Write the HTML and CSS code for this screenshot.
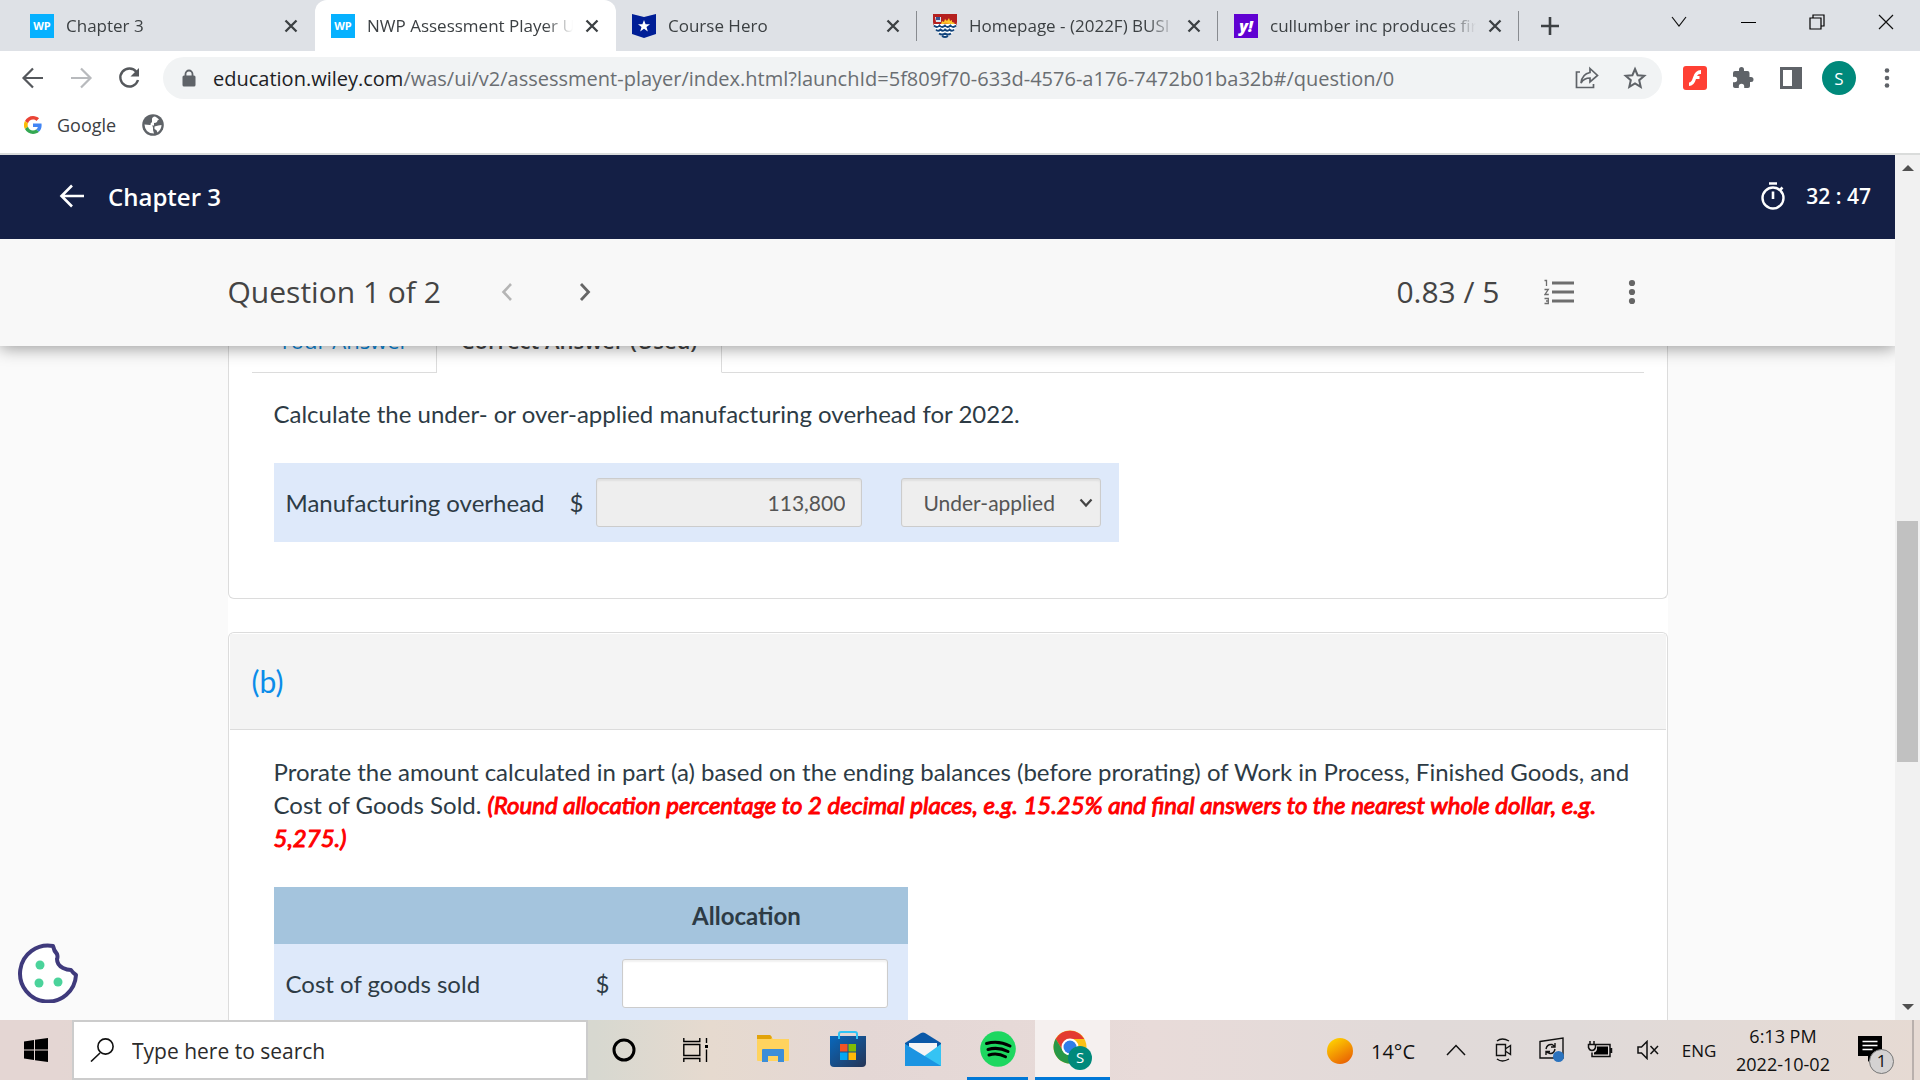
FILE: index.html
```html
<!DOCTYPE html>
<html lang="en">
<head>
<meta charset="utf-8">
<meta name="viewport" content="width=device-width, initial-scale=1">
<title>NWP Assessment Player UI</title>
<link rel="stylesheet" href="styles.css">
</head>
<body>
<svg class="defs" aria-hidden="true">
  <symbol id="i-close" viewBox="0 0 14 14"><path d="M1.5 1.5l11 11M12.500 1.500l-11 11" fill="none" stroke="currentColor" stroke-width="2.300"/></symbol>
</svg>

<header class="browser">
  <div class="tab-strip">
    <div class="tab">
      <span class="favicon wp">WP</span><span class="tab-title">Chapter 3</span>
      <button class="tab-close" aria-label="Close tab"><svg><use href="#i-close"/></svg></button>
    </div>
    <div class="tab tab-active">
      <span class="favicon wp">WP</span><span class="tab-title">NWP Assessment Player UI</span>
      <button class="tab-close" aria-label="Close tab"><svg><use href="#i-close"/></svg></button>
    </div>
    <div class="tab tab-divided">
      <svg class="favicon" viewBox="0 0 24 24"><path d="M0 0l12 3 12-3v20l-12 4L0 20z" fill="#001e96"/><path d="M12 6l1.600 4.300H18l-3.500 2.700 1.300 4.400L12 14.800l-3.800 2.600L9.500 13 6 10.300h4.400z" fill="#fff"/></svg>
      <span class="tab-title">Course Hero</span>
      <button class="tab-close" aria-label="Close tab"><svg><use href="#i-close"/></svg></button>
    </div>
    <div class="tab tab-divided">
      <svg class="favicon" viewBox="0 0 24 24"><path d="M0 0h24v8q0 3-2 5H2q-2-2-2-5z" fill="#b5201f"/><path d="M2 3h6v5H3z" fill="#d9e4f2"/><path d="M3 3h4v3H3z" fill="#3a4f8c"/><path d="M8 10l1-3 2 1 1-3 2 2 2-3 1 3 2-1v2l3 1-2 2z" fill="#ffc72c"/><path d="M9 11q3-5 9 0z" fill="#f39a1f"/><path d="M1 10h22v2q-1 7-11 12Q2 18 1 12z" fill="#fff"/><path d="M1 11.500q3 3 5.500 0 2.500 3 5.500 0 2.500 3 5.500 0 2.500 3 5.500 0M3 15.500q2 2.500 4.500 0 2.500 2.500 4.500 0 2.500 2.500 4.500 0 2.500 2.500 4.500 0M6 19.500q3 2 6 0 3 2 6 0M9 22q3 2 6 0" fill="none" stroke="#12447c" stroke-width="1.800"/></svg>
      <span class="tab-title">Homepage - (2022F) BUSI 2083</span>
      <button class="tab-close" aria-label="Close tab"><svg><use href="#i-close"/></svg></button>
    </div>
    <div class="tab tab-divided">
      <span class="favicon yahoo">y!</span>
      <span class="tab-title">cullumber inc produces fire trucks</span>
      <button class="tab-close" aria-label="Close tab"><svg><use href="#i-close"/></svg></button>
    </div>
    <button class="new-tab" aria-label="New tab"><svg width="20" height="20" viewBox="0 0 20 20"><path d="M10 1v18M1 10h18" stroke="#3c4043" stroke-width="2.600"/></svg></button>
    <div class="window-controls">
      <button aria-label="Search tabs"><svg width="16" height="16" viewBox="0 0 16 16"><path d="M1 3l7 9 7-9" fill="none" stroke="#111" stroke-width="1.200"/></svg></button>
      <button aria-label="Minimize"><svg width="16" height="16" viewBox="0 0 16 16"><path d="M1 8.500h15" stroke="#000" stroke-width="1"/></svg></button>
      <button aria-label="Restore"><svg width="16" height="16" viewBox="0 0 16 16"><path d="M1 4h11v11H1zM4 4V1h11v11h-3" fill="none" stroke="#000" stroke-width="1.200"/></svg></button>
      <button aria-label="Close"><svg width="16" height="16" viewBox="0 0 16 16"><path d="M1 1l14 14M15 1L1 15" stroke="#111" stroke-width="1.200"/></svg></button>
    </div>
  </div>

  <div class="toolbar">
    <div class="nav-buttons">
      <button aria-label="Back"><svg width="24" height="24" viewBox="0 0 24 24"><path d="M22 12H3M12 2.500L2.500 12l9.500 9.500" fill="none" stroke="#55585c" stroke-width="2.200"/></svg></button>
      <button aria-label="Forward"><svg width="24" height="24" viewBox="0 0 24 24"><path d="M2 12h19M12 2.500l9.500 9.500-9.500 9.500" fill="none" stroke="#b8babd" stroke-width="2.200"/></svg></button>
      <button aria-label="Reload"><svg width="24" height="24" viewBox="0 0 24 24"><path d="M19.500 6A9 9 0 1 0 21 14" fill="none" stroke="#55585c" stroke-width="2.400"/><path d="M22 2v8.500h-8.500z" fill="#55585c"/></svg></button>
    </div>
    <div class="omnibox">
      <svg width="14" height="18" viewBox="0 0 14 18"><path d="M3.500 7V5a3.500 3.500 0 0 1 7 0v2" fill="none" stroke="#5f6368" stroke-width="1.800"/><rect x=".5" y="6.500" width="13" height="11" rx="1.500" fill="#5f6368"/></svg>
      <div class="url" role="textbox" aria-label="Address" contenteditable="true" spellcheck="false"><span class="url-host">education.wiley.com</span>/was/ui/v2/assessment-player/index.html?launchId=5f809f70-633d-4576-a176-7472b01ba32b#/question/0</div>
      <button aria-label="Share"><svg width="24" height="24" viewBox="0 0 24 24"><path d="M5 6H1.500v15.500h17V18" fill="none" stroke="#5f6368" stroke-width="1.700"/><path d="M15 2.500L22.500 9.500 15 16v-4q-6 0-9 5 1-9 9-10.500z" fill="none" stroke="#5f6368" stroke-width="1.700"/></svg></button>
      <button aria-label="Bookmark this tab"><svg width="24" height="24" viewBox="0 0 24 24"><path d="M12 3l2.600 6.200 6.700.6-5.100 4.400 1.500 6.600L12 17.300l-5.700 3.500 1.500-6.600-5.100-4.400 6.700-.6z" fill="none" stroke="#5f6368" stroke-width="2"/></svg></button>
    </div>
    <div class="extensions">
      <button aria-label="Flash"><svg width="24" height="24" viewBox="0 0 24 24"><rect width="24" height="24" rx="3" fill="#ff4034"/><path d="M18 4v4q-3-.5-4 2h2.500v3H13q-2 7-7 7v-3.500q2.500 0 4-5Q12 4 18 4z" fill="#fff"/></svg></button>
      <button aria-label="Extensions"><svg width="24" height="24" viewBox="0 0 24 24"><path d="M20 11h-1.500V7a2 2 0 0 0-2-2H13V3.500a2.500 2.500 0 0 0-5 0V5H4a2 2 0 0 0-2 2v3.800h1.500a2.700 2.700 0 0 1 0 5.400H2V20c0 1.100.9 2 2 2h3.800v-1.500a2.700 2.700 0 0 1 5.400 0V22H17a2 2 0 0 0 2-2v-4h1a2.500 2.500 0 0 0 0-5z" fill="#5f6368"/></svg></button>
      <button aria-label="Side panel"><svg width="24" height="24" viewBox="0 0 24 24"><path d="M1 1h22v22H1zM4 4v16h9V4z" fill="#5f6368" fill-rule="evenodd"/></svg></button>
      <button class="avatar" aria-label="Profile">S</button>
      <button aria-label="Menu"><svg width="24" height="24" viewBox="0 0 24 24"><g fill="#5f6368"><circle cx="12" cy="4.500" r="2.300"/><circle cx="12" cy="12" r="2.300"/><circle cx="12" cy="19.500" r="2.300"/></g></svg></button>
    </div>
  </div>

  <nav class="bookmarks" aria-label="Bookmarks">
    <a href="#"><svg width="18" height="18" viewBox="0 0 48 48"><path fill="#ea4335" d="M24 9.500c3.500 0 6.700 1.200 9.200 3.600l6.900-6.900C35.900 2.400 30.500 0 24 0 14.600 0 6.500 5.400 2.600 13.200l8 6.200C12.400 13.700 17.700 9.500 24 9.500z"/><path fill="#4285f4" d="M47 24.600c0-1.600-.2-3.100-.4-4.600H24v9h12.900c-.6 3-2.300 5.500-4.800 7.200l7.700 6C44.400 38 47 31.800 47 24.600z"/><path fill="#fbbc05" d="M10.500 28.600a14.500 14.500 0 0 1 0-9.200l-8-6.200a24 24 0 0 0 0 21.600z"/><path fill="#34a853" d="M24 48c6.500 0 11.900-2.100 15.900-5.800l-7.700-6c-2.200 1.500-4.900 2.300-8.200 2.300-6.300 0-11.600-4.200-13.500-9.900l-8 6.200C6.500 42.600 14.600 48 24 48z"/></svg>Google</a>
    <a href="#" aria-label="Site"><svg width="22" height="22" viewBox="0 0 22 22"><circle cx="11" cy="11" r="10.800" fill="#5f6368"/><path d="M2.500 10.500L8 11q3 0 3 3v2l1 3.500q-9 0-9.500-9zM10 5q0-2 3-2.500 2 1 4 3-2 .5-2 2.500-1 1-3 1v2.500H8.500Q8 9 10 8zM12.500 12.500q4-1.500 7-1.500 0 4-4 7.500-.5-3-3-3.500z" fill="#fff"/></svg></a>
  </nav>
</header>

<div class="page">
  <div class="app">
    <header class="app-bar">
      <button aria-label="Back"><svg width="26" height="24" viewBox="0 0 26 24"><path d="M25 12H2.500M13 1.500L2.500 12 13 22.500" fill="none" stroke="#fff" stroke-width="2.600"/></svg></button>
      <h1>Chapter 3</h1>
      <svg width="24" height="28" viewBox="0 0 24 28"><circle cx="12" cy="16" r="10.500" fill="none" stroke="#fff" stroke-width="2.400"/><path d="M8 1.500h8M12 9.500v7.500M18.500 8.500l3-3" fill="none" stroke="#fff" stroke-width="2.600"/></svg>
      <span class="timer">32 : 47</span>
    </header>

    <div class="question-bar">
      <div class="question-bar-inner">
        <h2>Question 1 of 2</h2>
        <button aria-label="Previous question" disabled><svg width="12" height="18" viewBox="0 0 12 18"><path d="M10 1L2.500 9l7.500 8" fill="none" stroke="#b5b5b5" stroke-width="2.600"/></svg></button>
        <button aria-label="Next question"><svg width="12" height="18" viewBox="0 0 12 18"><path d="M2 1l7.500 8L2 17" fill="none" stroke="#666" stroke-width="2.800"/></svg></button>
        <span class="score">0.83 / 5</span>
        <button aria-label="Question list"><svg width="30" height="26" viewBox="0 0 30 26"><path d="M8 4h22M8 13h22M8 22h22" stroke="#6e6e6e" stroke-width="3"/><path d="M.5 1.500h2V7M.5 10.500h3.800L1 15.500h3.800M.5 19.500h3.800v5H.5M2 22h2" fill="none" stroke="#6e6e6e" stroke-width="1.300"/></svg></button>
        <button aria-label="More options"><svg width="30" height="26" viewBox="0 0 30 26"><g fill="#666"><circle cx="15" cy="4" r="3.100"/><circle cx="15" cy="13" r="3.100"/><circle cx="15" cy="22" r="3.100"/></g></svg></button>
      </div>
    </div>

    <main class="content">
      <div class="sheet">
        <section class="card card-first">
          <div class="answer-tabs">
            <a href="#" class="answer-tab">Your Answer</a>
            <a href="#" class="answer-tab answer-tab-current">Correct Answer (Used)</a>
            <span class="answer-tabs-rest"></span>
          </div>
          <div class="card-body">
            <p>Calculate the under- or over-applied manufacturing overhead for 2022.</p>
            <table class="answer-table overhead">
              <tr>
                <th scope="row"><label for="overhead">Manufacturing overhead</label></th>
                <td><span class="money"><span>$</span><input id="overhead" type="text" value="113,800" readonly></span></td>
                <td><span class="choice"><select aria-label="Under- or over-applied"><option>Under-applied</option><option>Over-applied</option></select><svg width="14" height="10" viewBox="0 0 14 10"><path d="M1.500 1.500L7 7.500l5.500-6" fill="none" stroke="#444" stroke-width="2.200"/></svg></span></td>
              </tr>
            </table>
          </div>
        </section>

        <section class="card card-open">
          <h3>(b)</h3>
          <div class="card-body">
            <p>Prorate the amount calculated in part (a) based on the ending balances (before prorating) of Work in Process, Finished Goods, and Cost of Goods Sold. <strong>(Round allocation percentage to 2 decimal places, e.g. 15.25% and final answers to the nearest whole dollar, e.g. 5,275.)</strong></p>
            <table class="answer-table allocation">
              <thead><tr><td></td><th scope="col">Allocation</th></tr></thead>
              <tbody><tr>
                <th scope="row"><label for="cogs">Cost of goods sold</label></th>
                <td><span class="money"><span>$</span><input id="cogs" type="text"></span></td>
              </tr></tbody>
            </table>
          </div>
        </section>
      </div>
      <button class="cookie" aria-label="Cookie preferences"><svg width="60" height="60" viewBox="0 0 60 60"><path d="M35 3A28 28 0 1 0 58 32q-3-2-5-5-4 0-8-2-6-3-6-9 1-2 0-5-3-3-4-8z" fill="#fff" stroke="#3f3a7c" stroke-width="4" stroke-linejoin="round"/><g fill="#4bd39b"><circle cx="22" cy="22" r="4.500"/><circle cx="21" cy="40" r="4.500"/><circle cx="40" cy="39" r="4.500"/></g></svg></button>
    </main>
  </div>

  <div class="scrollbar" aria-hidden="true">
    <svg width="12" height="8" viewBox="0 0 12 8"><path d="M0 7l6-6 6 6z" fill="#505050"/></svg>
    <div class="scroll-track"><span class="scroll-before"></span><span class="scroll-thumb"></span><span class="scroll-after"></span></div>
    <svg width="12" height="8" viewBox="0 0 12 8"><path d="M0 1l6 6 6-6z" fill="#505050"/></svg>
  </div>
</div>

<footer class="taskbar">
  <button class="start" aria-label="Start"><svg width="24" height="24" viewBox="0 0 24 24"><path d="M0 3.500L10 2v9.500H0zM11 1.800L24 0v11.500H11zM0 12.500h10V22L0 20.500zM11 12.500h13V24l-13-1.800z"/></svg></button>
  <label class="search"><svg width="24" height="24" viewBox="0 0 24 24"><path d="M10 15L1 23.500" stroke="#111" stroke-width="1.600"/><circle cx="15.500" cy="8.500" r="7.600" fill="none" stroke="#111" stroke-width="1.600"/></svg><input type="text" placeholder="Type here to search" aria-label="Type here to search"></label>
  <div class="system-icons">
    <button aria-label="Cortana"><svg width="24" height="24" viewBox="0 0 24 24"><circle cx="12" cy="12" r="10" fill="none" stroke="#000" stroke-width="3"/></svg></button>
    <button aria-label="Task view"><svg width="26" height="24" viewBox="0 0 26 24"><path d="M.8 0v3.500h16V0M.8 24v-3.500h16V24M.8 6.500h16v11H.8zM23.500 0v5M23.500 11.500V24" fill="none" stroke="#000" stroke-width="1.400"/><rect x="22" y="7" width="3" height="3"/></svg></button>
  </div>
  <div class="apps">
    <button aria-label="File Explorer"><svg width="32" height="28" viewBox="0 0 32 28"><path d="M0 0h13l3 4h16v21q0 1-1 1H1q-1 0-1-1z" fill="#ffd35e"/><path d="M0 0h13q3 2 1 4H0z" fill="#e2a30a"/><path d="M5 27V15q0-1 1-1h20q1 0 1 1v12h-6v-6H11v6z" fill="#3c8ed8"/></svg></button>
    <button aria-label="Microsoft Store"><svg width="36" height="36" viewBox="0 0 36 36"><defs><linearGradient id="store" x1="0" y1="0" x2="1" y2="1"><stop offset="0" stop-color="#0868bd"/><stop offset="1" stop-color="#263556"/></linearGradient></defs><path d="M0 5h36v27q0 4-4 4H4q-4 0-4-4z" fill="url(#store)"/><path d="M9 8V3q0-2 2-2h14q2 0 2 2v5" fill="none" stroke="#30c4f5" stroke-width="2"/><path d="M10 13h7.500v7.500H10z" fill="#f35325"/><path d="M18.500 13H26v7.500h-7.500z" fill="#81bc06"/><path d="M10 21.500h7.500V29H10z" fill="#05a6f0"/><path d="M18.500 21.500H26V29h-7.500z" fill="#ffba08"/></svg></button>
    <button aria-label="Mail"><svg width="36" height="34" viewBox="0 0 36 34"><path d="M0 11L16 1q2-1 4 0l16 10v8H0z" fill="#0a58a8"/><path d="M4 11h28v14H4z" fill="#f4f4f6"/><path d="M0 12l18 13L36 12v22H0z" fill="#35c3f3"/><path d="M0 12l36 22H0z" fill="#1b94e2"/></svg></button>
    <button class="app-running" aria-label="Spotify"><svg width="36" height="36" viewBox="0 0 36 36"><circle cx="18" cy="18" r="17.800" fill="#1ed760"/><path d="M6.500 12.500q12-3.500 23.500 2.500M8 18.500q10-3 20 2M9 24q8.500-2.500 16.500 1.800" fill="none" stroke="#000" stroke-width="3" stroke-linecap="round"/></svg></button>
    <button class="app-current" aria-label="Google Chrome"><svg width="40" height="44" viewBox="0 -2 40 44"><circle cx="17" cy="18" r="16.500" fill="#fbc116"/><path d="M2.700 9.800A16.500 16.500 0 0 1 31.300 10H17l-7 12z" fill="#e33b2e"/><path d="M2.700 9.800A16.500 16.500 0 0 0 17 34.500l7-12.500H10z" fill="#279847"/><circle cx="17" cy="18" r="8.500" fill="#fff"/><circle cx="17" cy="18" r="6.500" fill="#2f7de9"/><circle cx="27" cy="29" r="12" fill="#00897b"/><text x="27" y="34" text-anchor="middle" class="chrome-badge">S</text></svg></button>
  </div>
  <div class="tray">
    <button class="weather"><svg width="26" height="26" viewBox="0 0 26 26"><defs><linearGradient id="sun" x1="0.200" y1="0" x2="0.800" y2="1"><stop offset="0" stop-color="#ffd400"/><stop offset="1" stop-color="#e85d04"/></linearGradient></defs><circle cx="13" cy="13" r="13" fill="url(#sun)"/></svg>14°C</button>
    <button aria-label="Show hidden icons"><svg width="20" height="12" viewBox="0 0 20 12"><path d="M1 11L10 1.500 19 11" fill="none" stroke="#111" stroke-width="1.500"/></svg></button>
    <button aria-label="Meet now"><svg width="18" height="24" viewBox="0 0 18 24"><path d="M1.500 6.500h9v11h-9zM11 10.500l4.500-3v9l-4.500-3M2 3q5-4 12 0M2 21q5 4 12 0" fill="none" stroke="#111" stroke-width="1.400"/></svg></button>
    <button aria-label="Updates"><svg width="26" height="26" viewBox="0 0 26 26"><path d="M1 4.500L24 1v20L1 21z" fill="none" stroke="#111" stroke-width="1.400"/><path d="M7 12q1-5 6-4.500l3 2M16 6v4h-4M16 12q-1 5-5 4.500L7.500 15M7 18v-3.500h4" fill="none" stroke="#111" stroke-width="1.400"/><circle cx="19.500" cy="19.500" r="5.500" fill="#2b73be"/></svg></button>
    <button aria-label="Battery"><svg width="26" height="18" viewBox="0 0 26 18"><path d="M9 3.500h14v12H5v-4M24.500 7v5M3 0v3M7 0v3M1.500 3.500h7v3q-1 3-3.500 3t-3.500-3z" fill="none" stroke="#111" stroke-width="1.500"/><path d="M10 5.500h11v8H7v-2q3-1 3-4z"/></svg></button>
    <button aria-label="Muted"><svg width="22" height="20" viewBox="0 0 22 20"><path d="M1 7h3.500L10 1.500v17L4.500 13H1zM13.500 6l7.500 8M21 6l-7.500 8" fill="none" stroke="#111" stroke-width="1.500"/></svg></button>
    <button class="language">ENG</button>
    <button class="clock"><span>6:13 PM</span><span>2022-10-02</span></button>
    <button class="notices" aria-label="Notifications"><svg width="24" height="28" viewBox="0 0 24 28"><path d="M0 0h24v20H15l-5 6v-6H0z"/><path d="M4.500 5.500h15M4.500 9.500h15M4.500 13.500h10" stroke="#fff" stroke-width="1.400"/></svg><span class="notice-count">1</span></button>
  </div>
</footer>
</body>
</html>
```
FILE: styles.css
```css
* { box-sizing: border-box; }

body {
  margin: 0;
  height: 100vh;
  display: flex;
  flex-direction: column;
  overflow: hidden;
  font-family: "Open Sans", "Noto Sans", sans-serif;
  color: #3c4043;
  background: #fff;
}

button {
  margin: 0;
  padding: 0;
  border: 0;
  background: none;
  font: inherit;
  color: inherit;
  display: flex;
  align-items: center;
  justify-content: center;
  flex: none;
}

svg { display: block; flex: none; }
a { text-decoration: none; color: inherit; }
.defs { position: absolute; width: 0; height: 0; }

/* Browser window */
.browser { flex: none; border-bottom: 2px solid #dadcdb; }

.tab-strip {
  display: flex;
  height: 51px;
  padding-left: 14px;
  background: #dee1e6;
  font-size: 17px;
}

.tab {
  display: flex;
  align-items: center;
  gap: 12px;
  width: 301px;
  min-width: 0;
  padding: 0 17px 0 16px;
}

.tab-active { background: #fff; border-radius: 12px 12px 0 0; }

.tab-divided {
  background: linear-gradient(#888b90, #888b90) right center / 1px 30px no-repeat;
}

.favicon { width: 24px; height: 24px; flex: none; }

.wp, .yahoo {
  display: flex;
  align-items: center;
  justify-content: center;
  color: #fff;
  font-weight: 700;
}

.wp { background: #06b1ff; font-size: 11px; }
.yahoo { background: #6001d2; font-size: 16px; font-weight: 800; font-style: italic; }

.tab-title {
  flex: 1;
  overflow: hidden;
  white-space: nowrap;
  mask-image: linear-gradient(to left, transparent, #000 28px);
}

.tab-close svg { width: 14px; height: 14px; }
.new-tab { width: 62px; }

.window-controls { display: flex; margin-left: auto; }
.window-controls button { width: 69px; height: 44px; }

.toolbar {
  display: flex;
  align-items: center;
  height: 54px;
  padding: 0 9px;
}

.nav-buttons { display: flex; }
.nav-buttons button { width: 48px; }
.nav-buttons + .omnibox { margin-left: 10px; }

.omnibox {
  flex: 1;
  min-width: 0;
  display: flex;
  align-items: center;
  height: 42px;
  padding: 0 3px 0 19px;
  border-radius: 21px;
  background: #f1f3f4;
  font-size: 20px;
  color: #6a6e72;
}

.omnibox button { width: 48px; }

.url {
  flex: 1;
  min-width: 0;
  margin-left: 17px;
  overflow: hidden;
  white-space: nowrap;
}

.url-host { color: #202124; }

.extensions { display: flex; align-items: center; margin-left: 9px; }
.extensions button { width: 48px; }

.extensions .avatar {
  width: 34px;
  height: 34px;
  margin: 0 7px;
  border-radius: 50%;
  background: #00897b;
  color: #fff;
  font-size: 17px;
}

.bookmarks {
  display: flex;
  align-items: center;
  gap: 26px;
  height: 48px;
  padding: 0 24px 8px;
  font-size: 18px;
}

.bookmarks a { display: flex; align-items: center; gap: 15px; }

/* Assessment player */
.page { flex: 1; min-height: 0; display: flex; }

.app {
  flex: 1;
  min-width: 0;
  display: flex;
  flex-direction: column;
  background: #fafafa;
}

.app-bar {
  flex: none;
  display: flex;
  align-items: center;
  height: 84px;
  padding: 0 24px 2px 59px;
  background: #141f45;
  color: #fff;
  font-weight: 600;
}

.app-bar h1 {
  flex: 1;
  margin: 0 0 0 23px;
  font-size: 24px;
  font-weight: 600;
}

.timer { margin-left: 21px; font-size: 21px; }

.question-bar {
  flex: none;
  position: relative;
  z-index: 1;
  background: #f8f8f8;
  box-shadow: 0 2px 16px rgba(0, 0, 0, 0.4);
  clip-path: inset(0 0 -30px 0);
}

.question-bar-inner {
  display: flex;
  align-items: center;
  max-width: 1440px;
  height: 107px;
  margin: 0 auto;
  padding: 0 21px 2px 0;
  font-size: 30px;
  color: #444;
}

.question-bar h2 { margin: 0 27px 0 0; font-size: 30px; font-weight: 400; }
.question-bar button { width: 78px; }
.question-bar .score { margin-left: auto; margin-right: 44px; }
.question-bar .score ~ button { width: 30px; }
.question-bar .score ~ button + button { margin-left: 43px; }

.content {
  flex: 1;
  min-height: 0;
  position: relative;
  overflow: hidden;
  font-family: Lato, sans-serif;
  font-size: 24px;
  line-height: 33px;
  color: #2d3b45;
}

.sheet { max-width: 1440px; margin: -36px auto 0; background: #fff; }

.card { border: 1px solid #dcdcdc; background: #fff; }
.card-first { border-top: 0; border-radius: 0 0 6px 6px; padding-bottom: 56px; }
.card-open { margin-top: 33px; border-bottom: 0; border-radius: 6px 6px 0 0; }

.answer-tabs {
  display: flex;
  margin: 0 23px;
  font-family: "Open Sans", sans-serif;
  font-size: 22px;
}

.answer-tab {
  padding: 14px 27px 15px;
  border-right: 1px solid #dcdcdc;
  border-bottom: 1px solid #dcdcdc;
  color: #0b87da;
}

.answer-tab-current {
  padding-left: 24px;
  padding-right: 24px;
  border-bottom-color: transparent;
  color: #444;
  font-weight: 600;
}

.answer-tabs-rest { flex: 1; border-bottom: 1px solid #dcdcdc; }

.card h3 {
  margin: 1px;
  padding: 31px 22px;
  border-bottom: 1px solid #dcdcdc;
  background: #f4f4f4;
  color: #0b8ce9;
  font-size: 30px;
  font-weight: 400;
}

.card-body { padding: 24px 28px 0 45px; }
.card-body p { margin: 0 0 33px; }

/* Instructions use the regular italic, thickened by an outline */
.card-body strong {
  color: #f00;
  font-style: italic;
  font-weight: 400;
  -webkit-text-stroke: 1px #f00;
}

.answer-table { border-collapse: collapse; background: #dee9fa; }
.answer-table th, .answer-table td { padding: 15px 0; font-weight: 400; text-align: left; }
.answer-table th[scope="row"] { padding-left: 12px; }

.overhead th { width: 296px; }
.overhead td:last-child { padding-left: 39px; padding-right: 18px; }

.allocation thead { background: #a4c4dd; }
.allocation thead td { width: 322px; padding: 0; }
.allocation thead th { padding: 12px 11px 12px 0; text-align: center; font-weight: 700; }
.allocation tbody td { padding-right: 20px; }

.money { display: flex; align-items: center; gap: 13px; }

.money input, .choice select {
  height: 49px;
  border: 1px solid #ccc;
  border-radius: 3px;
  background: #fff;
  box-shadow: inset 0 2px 2px rgba(0, 0, 0, 0.06);
  font-family: inherit;
  font-size: 21px;
  color: #555;
}

.money input { width: 266px; padding: 0 16px; text-align: right; }
.money input[readonly], .choice select { background: #eee; }

.choice { position: relative; display: block; }
.choice select { display: block; width: 200px; padding: 0 21px; appearance: none; }
.choice svg { position: absolute; right: 8px; top: 20px; pointer-events: none; }

.cookie { position: absolute; left: 18px; bottom: 17px; }

/* Page scrollbar */
.scrollbar {
  flex: none;
  display: flex;
  flex-direction: column;
  align-items: center;
  width: 25px;
  padding: 9px 2px;
  background: #f1f1f1;
}

.scroll-track { flex: 1; display: flex; flex-direction: column; align-self: stretch; padding: 8px 0; }
.scroll-before { flex: 341; }
.scroll-thumb { flex: 241; background: #c1c1c1; }
.scroll-after { flex: 233; }

/* Desktop taskbar */
.taskbar {
  flex: none;
  display: flex;
  height: 60px;
  background: linear-gradient(to right, #e4d6d3 0, #e4d6d3 3%, #d7d8d0 31%, #e6dacf 37%, #e4d7d5 45%, #e8dbd9 60%, #e1dad9 74%, #e0dad9 82%, #e6dad3 100%);
  color: #111;
}

.start { width: 72px; }

.search {
  display: flex;
  align-items: center;
  gap: 18px;
  width: 516px;
  padding: 0 16px;
  border: 2px solid #ccc;
  background: #fff;
}

.search input {
  flex: 1;
  min-width: 0;
  padding: 2px 0 0;
  border: 0;
  outline: 0;
  background: none;
  font-family: inherit;
  font-size: 21px;
}

.search input::placeholder { color: #2b2b2b; }

.system-icons, .apps { display: flex; }
.system-icons button { width: 72px; }
.apps { margin-left: 3px; }
.apps button { width: 75px; border-bottom: 3px solid transparent; }
.apps .app-running { background: linear-gradient(#0078d7, #0078d7) center bottom / 61px 3px no-repeat border-box; }
.apps .app-current { background: #f5f0ef; border-bottom-color: #0078d7; }
.chrome-badge { font-size: 15px; fill: #fff; }

.tray { display: flex; margin-left: auto; padding-right: 12px; border-right: 2px solid #b9b0ac; margin-right: 6px; }
.tray button { width: 48px; }
.tray .weather { width: auto; gap: 18px; margin-right: 17px; padding-top: 2px; font-size: 20px; }
.tray .language { width: 54px; font-size: 17px; }
.tray .clock { width: 114px; flex-direction: column; gap: 4px; font-size: 18px; line-height: 24px; }
.tray .notices { width: 60px; position: relative; }

.notice-count {
  position: absolute;
  right: 6px;
  bottom: 6px;
  width: 25px;
  height: 25px;
  border: 1px solid #777;
  border-radius: 50%;
  background: #d4d2d2;
  font-size: 17px;
  line-height: 22px;
  text-align: center;
}
```
